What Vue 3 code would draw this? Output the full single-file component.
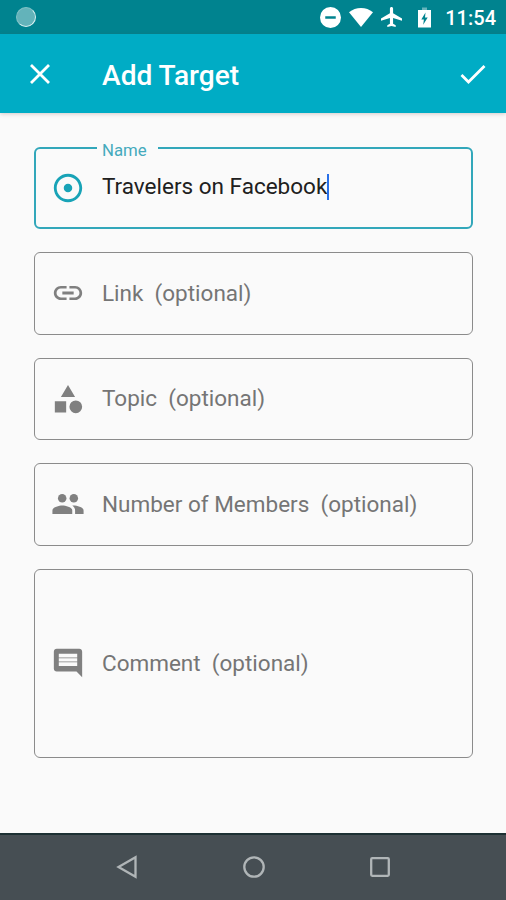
<script setup>
const fields = [
  { id: 'name', label: 'Name', value: 'Travelers on Facebook', icon: 'target', focused: true },
  { id: 'link', label: 'Link', icon: 'link' },
  { id: 'topic', label: 'Topic', icon: 'shapes' },
  { id: 'members', label: 'Number of Members', icon: 'people' },
  { id: 'comment', label: 'Comment', icon: 'comment' },
]

const icons = {
  target: 'M12 2C6.49 2 2 6.49 2 12s4.49 10 10 10 10-4.49 10-10S17.51 2 12 2zm0 18c-4.41 0-8-3.59-8-8s3.59-8 8-8 8 3.59 8 8-3.59 8-8 8zm3-8c0 1.66-1.34 3-3 3s-3-1.34-3-3 1.34-3 3-3 3 1.34 3 3z',
  link: 'M3.9 12c0-1.71 1.39-3.1 3.1-3.1h4V7H7c-2.76 0-5 2.24-5 5s2.24 5 5 5h4v-1.9H7c-1.71 0-3.1-1.39-3.1-3.1zM8 13h8v-2H8v2zm9-6h-4v1.9h4c1.71 0 3.1 1.39 3.1 3.1s-1.39 3.1-3.1 3.1h-4V17h4c2.76 0 5-2.24 5-5s-2.24-5-5-5z',
  shapes: 'M12 2.200L7 10.600h10zM2.700 13.500h8v8h-8zM17.500 13a4.500 4.500 0 1 0 0 9 4.500 4.500 0 0 0 0-9z',
  comment: 'M21.99 4c0-1.1-.89-2-1.99-2H4c-1.1 0-2 .9-2 2v12c0 1.1.9 2 2 2h14l4 4-.01-18zM18.500 14.200H5.500V11.500h13zM18.500 10.900H5.500V8.700h13zM18.500 8.100H5.500V5.400h13z',
}
</script>

<template>
  <div class="screen">
    <header class="status">
      <span class="spinner"></span>
      <div class="indicators">
        <svg class="dnd" viewBox="0 0 20 20"><path fill-rule="evenodd" d="M10 0a10 10 0 1 0 0 20 10 10 0 0 0 0-20zM5 8.800v2.400h10V8.800z" /></svg>
        <svg class="wifi" viewBox="0 0 24 19"><path d="M12 19L0 4.200C3.500 1.500 7.500 0 12 0s8.500 1.500 12 4.200z" /></svg>
        <svg class="plane" viewBox="2 2 20 20"><path d="M22 15v-2l-8.500-5V3.500c0-.83-.67-1.500-1.500-1.500s-1.500.67-1.500 1.500V8L2 13v2l8.500-2.500V18L8 19.500V21l4-1 4 1v-1.500L13.500 18v-5.500L22 15z" /></svg>
        <svg class="battery" viewBox="0 0 13 20"><path class="cap" d="M4 0h5v2.500H4z" /><path fill-rule="evenodd" d="M0 2.500h13V20H0zM7.500 5L3.300 12h2.600l-.7 5.300L9.700 10H7z" /></svg>
        <span class="clock">11:54</span>
      </div>
    </header>
    <div class="toolbar">
      <svg class="close" viewBox="0 0 20 20"><path d="M1 1l18 18M19 1L1 19" /></svg>
      <h1>Add Target</h1>
      <svg class="check" viewBox="0 0 26 20"><path d="M1.500 11L8.500 18L24.500 2" /></svg>
    </div>
    <main class="form">
      <div v-for="f in fields" :key="f.id" class="field" :class="[f.id, { focused: f.focused }]">
        <span v-if="f.focused" class="floating">{{ f.label }}</span>
        <svg class="icon" viewBox="0 0 24 24">
          <g v-if="f.icon === 'people'">
            <circle cx="7.900" cy="8" r="3" />
            <circle cx="16.100" cy="8" r="3" />
            <path d="M1 19v-2.500C1 14.170 5.670 13 8 13s7 1.170 7 3.500V19z" />
            <path d="M16 13c-.29 0-.62.020-.97.050 1.160.84 1.970 1.970 1.970 3.450V19h6v-2.500c0-2.330-4.670-3.500-7-3.500z" />
          </g>
          <path v-else :d="icons[f.icon]" fill-rule="evenodd" />
        </svg>
        <span v-if="f.value" class="value">{{ f.value }}</span>
        <span v-else class="hint">{{ f.label }}&nbsp; (optional)</span>
        <span v-if="f.focused" class="caret"></span>
      </div>
    </main>
    <nav class="nav">
      <svg viewBox="0 0 24 24"><path d="M20.500 2.200v19.600L3.500 12z" /></svg>
      <svg viewBox="0 0 24 24"><circle cx="12" cy="12" r="9.700" /></svg>
      <svg viewBox="0 0 24 24"><rect x="3.200" y="3.200" width="17.600" height="17.600" rx="1" /></svg>
    </nav>
  </div>
</template>

<style>
body { margin: 0; background: #fafafa; }
</style>

<style scoped>
.screen { width: 506px; height: 900px; display: flex; flex-direction: column; overflow: hidden; background: #fafafa; font-family: Roboto, sans-serif; box-sizing: border-box; }
svg { display: block; fill: currentColor; flex: none; }
.status { height: 34px; flex: none; display: flex; align-items: center; justify-content: space-between; padding: 0 10px 0 16px; background: #00838f; color: #fff; box-sizing: border-box; }
.spinner { width: 20px; height: 20px; box-sizing: border-box; border-radius: 50%; background: #63b3ba; border: 1.5px solid #80c1c6; border-right-color: #d8f0f1; border-bottom-color: #d8f0f1; }
.indicators { display: flex; align-items: center; height: 34px; }
.dnd { width: 21px; height: 21px; margin-right: 8px; }
.wifi { width: 24px; height: 19px; margin-right: 8px; }
.plane { width: 21px; height: 21px; margin-right: 16px; }
.battery { width: 13px; height: 21px; margin-right: 14px; }
.cap { opacity: .4; }
.clock { font-size: 20px; font-weight: 500; line-height: 34px; padding-top: 2px; }
.toolbar { height: 79px; flex: none; display: flex; align-items: center; padding: 0 20px 0 30px; background: #00acc5; color: #fff; box-sizing: border-box; box-shadow: 0 1px 4px rgba(100, 65, 60, .25); }
.close { width: 20px; height: 20px; }
.close path, .check path { fill: none; stroke: currentColor; stroke-width: 2.8; }
h1 { margin: 4px auto 0 52px; font-size: 28.100px; line-height: 36px; font-weight: 500; }
.check { width: 26px; height: 20px; }
.form { flex: 1; display: flex; flex-direction: column; gap: 23px; padding: 33.500px 33px 0 34px; }
.field { position: relative; flex: none; height: 82.500px; box-sizing: border-box; border: 1.400px solid #8b8b8b; border-radius: 6px; display: flex; align-items: center; padding: 0 0 0 16px; color: #808080; }
.field.comment { height: 189px; }
.field.focused { border: 2.500px solid #32a7ba; padding-left: 15px; color: #18a3b7; }
.icon { width: 34px; height: 34px; margin-right: 17px; }
.value, .hint { font-size: 22.500px; line-height: 30px; white-space: nowrap; }
.value { color: #202020; margin-top: -4px; }
.hint { color: #757575; margin-top: -1px; }
.caret { width: 2px; height: 26px; background: #2870e8; margin-top: -2px; }
.floating { position: absolute; left: 61px; top: -9px; height: 20px; padding: 0 11px 0 5px; background: #fafafa; color: #45aabd; font-size: 16.800px; line-height: 20px; }
.nav { height: 67px; flex: none; display: flex; align-items: center; justify-content: space-between; padding: 0 114px 2px 115px; border-top: 2px solid #1d3033; background: #464e53; color: #b0b5b7; box-sizing: border-box; }
.nav svg { width: 24px; height: 24px; fill: none; stroke: currentColor; stroke-width: 2.300; }
</style>
